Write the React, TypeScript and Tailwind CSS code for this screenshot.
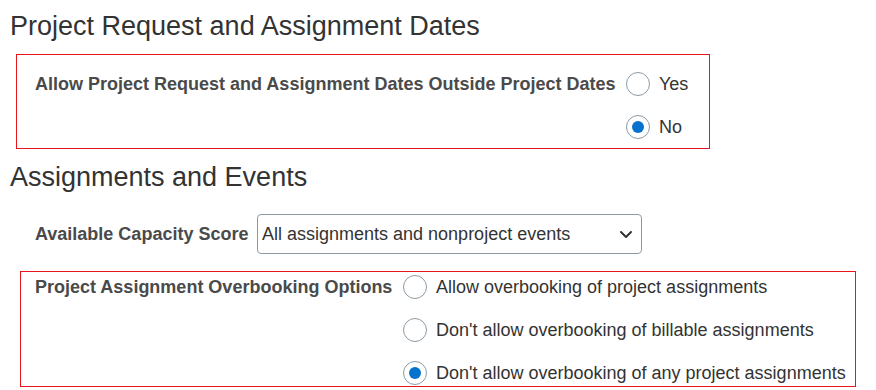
import React from "react";

function Radio({ checked, label }: { checked?: boolean; label: string }) {
  return (
    <div className="flex items-center h-[24px]">
      <div className="w-[24px] h-[24px] rounded-full border border-[#8a9aa6] bg-white flex items-center justify-center shrink-0">
        {checked && <div className="w-[12px] h-[12px] rounded-full bg-[#0572ce]" />}
      </div>
      <span className="ml-[9px] text-[18px] leading-[24px] text-[#333] whitespace-nowrap">{label}</span>
    </div>
  );
}

export default function App() {
  return (
    <div className="w-[876px] h-[390px] bg-white overflow-hidden font-['Liberation_Sans',Arial,sans-serif]">
      <h1 className="pl-[10px] pt-[10px] text-[27px] leading-[32px] text-[#333] font-normal whitespace-nowrap">
        Project Request and Assignment Dates
      </h1>
      <div className="mt-[12px] ml-[16px] w-[694px] h-[95px] border border-[#e8141e] flex pt-[17px] pl-[18px]">
        <div className="w-[591px] h-[24px] leading-[24px] text-[18px] font-bold text-[#4a4a4a] whitespace-nowrap">
          Allow Project Request and Assignment Dates Outside Project Dates
        </div>
        <div className="flex flex-col gap-[19px]">
          <Radio label="Yes" />
          <Radio label="No" checked />
        </div>
      </div>
      <h2 className="mt-[12px] pl-[10px] text-[27px] leading-[32px] text-[#333] font-normal whitespace-nowrap">
        Assignments and Events
      </h2>
      <div className="mt-[21px] pl-[35px] flex items-center">
        <div className="w-[222px] text-[18px] leading-[24px] font-bold text-[#4a4a4a] whitespace-nowrap">
          Available Capacity Score
        </div>
        <div className="w-[385px] h-[40px] border border-[#8c9aa5] rounded-[4px] bg-white flex items-center justify-between pl-[4px] pr-[8px]">
          <span className="text-[18px] leading-[24px] text-[#333] whitespace-nowrap">
            All assignments and nonproject events
          </span>
          <svg width="14" height="14" viewBox="0 0 14 14" fill="none">
            <path d="M2 5 L7 10 L12 5" stroke="#333" strokeWidth="2" strokeLinecap="round" strokeLinejoin="round" />
          </svg>
        </div>
      </div>
      <div className="mt-[17px] ml-[20px] w-[836px] h-[116px] border border-[#e8141e] flex pt-[3px] pl-[14px]">
        <div className="w-[368px] h-[24px] leading-[24px] text-[18px] font-bold text-[#4a4a4a] whitespace-nowrap">
          Project Assignment Overbooking Options
        </div>
        <div className="flex flex-col gap-[19px]">
          <Radio label="Allow overbooking of project assignments" />
          <Radio label="Don't allow overbooking of billable assignments" />
          <Radio label="Don't allow overbooking of any project assignments" checked />
        </div>
      </div>
    </div>
  );
}
